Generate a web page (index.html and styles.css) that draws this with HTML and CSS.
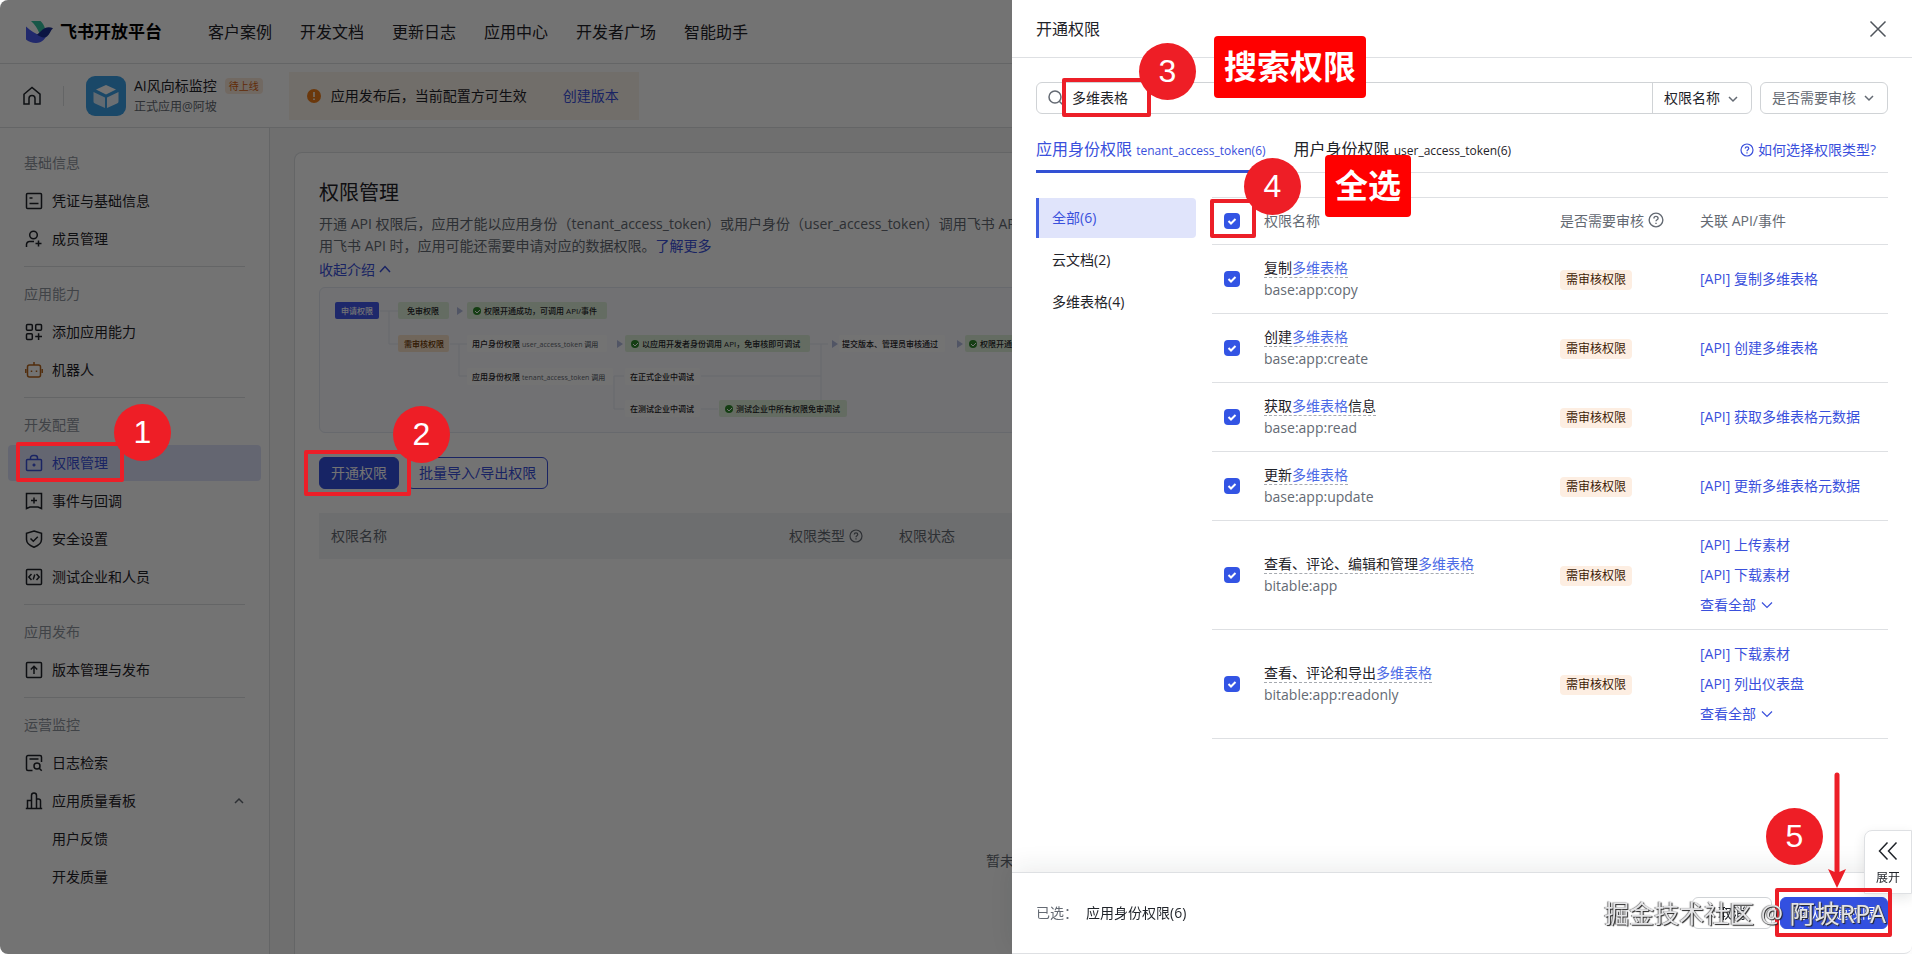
FILE: index.html
```html
<!DOCTYPE html>
<html lang="zh-CN">
<head>
    <meta charset="utf-8">
    <title>飞书开放平台 - 权限管理</title>
    <link rel="stylesheet" href="styles.css">
</head>
<body>
    <div class="page">
        <header class="topbar">
            <a href="#" class="logo">
                <svg width="28" height="24" viewBox="0 0 28 24">
                    <path d="M5 1h9.500c2 1.800 3.700 4.600 4.500 7.500l-5.500 5C11.500 8.500 9 4.500 5 1z" fill="#36c2a0"/>
                    <path d="M0 6.500c4.500 4.500 9.500 7.500 14.500 8.500 3 .500 6-1 8-3.500C20 18.500 16 23 10 23 6 23 2.500 21.700 0 19.500z" fill="#4a5cf0"/>
                    <path d="M11 14.500c3-1.500 4.500-5 8-6.500 2.800-1 5.800-.800 8 .300-2.500 2-3 6-6 8.200-3 2-7 .500-10-2z" fill="#1c2f94"/>
                </svg>
                <span>飞书开放平台</span>
            </a>
            <nav class="topnav">
                <a href="#">客户案例</a>
                <a href="#">开发文档</a>
                <a href="#">更新日志</a>
                <a href="#">应用中心</a>
                <a href="#">开发者广场</a>
                <a href="#">智能助手</a>
            </nav>
        </header>

        <div class="appbar">
            <a href="#" class="home" aria-label="首页">
                <svg width="20" height="20" viewBox="0 0 20 20" class="line"><path d="M2 8.200 10 1.500l8 6.700V18h-5v-5.500a3 3 0 0 0-6 0V18H2z"/></svg>
            </a>
            <svg class="app-icon" width="40" height="40" viewBox="0 0 40 40">
                <rect width="40" height="40" rx="9" fill="#3a9fe6"/>
                <path d="M20 9l10 4.500-10 5-10-5z" fill="#fff"/>
                <path d="M7.500 16l11.500 5.500V32l-10-4.500a2 2 0 0 1-1.500-2z" fill="#d8ecfb"/>
                <path d="M32.500 16 21 21.500V32l10-4.500a2 2 0 0 0 1.500-2z" fill="#eef7fe"/>
            </svg>
            <div class="app-info">
                <div class="app-name">AI风向标监控<span class="app-tag">待上线</span></div>
                <div class="app-owner">正式应用@阿坡</div>
            </div>
            <div class="notice">
                <svg width="14" height="14" viewBox="0 0 14 14"><circle cx="7" cy="7" r="7" fill="#ed7d1c"/><path d="M7 3v5M7 9.500v1.500" stroke="#fff" stroke-width="1.500"/></svg>
                <span>应用发布后，当前配置方可生效</span>
                <a href="#">创建版本</a>
            </div>
        </div>

        <div class="body">
            <aside class="sidebar">
                <div class="group">
                    <h2>基础信息</h2>
                    <a href="#"><svg viewBox="0 0 18 18" class="line"><rect x="1.500" y="1.500" width="15" height="15" rx="1"/><path d="M4.500 6h3M4.500 11.500h9"/></svg>凭证与基础信息</a>
                    <a href="#"><svg viewBox="0 0 18 18" class="line"><circle cx="8.500" cy="5" r="3.800"/><path d="M1.500 17v-2.500a3 3 0 0 1 3-3H9M13.500 10.500v6M10.500 13.500h6"/></svg>成员管理</a>
                </div>
                <div class="group">
                    <h2>应用能力</h2>
                    <a href="#"><svg viewBox="0 0 18 18" class="line"><rect x="1.500" y="1.500" width="5.800" height="5.800" rx="1"/><rect x="10.700" y="1.500" width="5.800" height="5.800" rx="1"/><rect x="1.500" y="10.700" width="5.800" height="5.800" rx="1"/><path d="M13.600 10.200v6.800M10.200 13.600H17"/></svg>添加应用能力</a>
                    <a href="#"><svg viewBox="0 0 18 18" class="line robot"><rect x="2.500" y="4" width="13" height="12" rx="2"/><path d="M9 1v3M.8 8v4M17.200 8v4M6.500 9.500v1.500M11.500 9.500v1.500"/></svg>机器人</a>
                </div>
                <div class="group">
                    <h2>开发配置</h2>
                    <a href="#" class="active"><svg viewBox="0 0 18 18" class="line"><rect x="1.500" y="5.500" width="15" height="11" rx="1"/><path d="M5.500 5.500V4a2.500 2.500 0 0 1 2.500-2.500h2A2.500 2.500 0 0 1 12.500 4v1.500M9 9.500v3M7.500 11h3"/></svg>权限管理</a>
                    <a href="#"><svg viewBox="0 0 18 18" class="line"><path d="M1.500 1.500h15v15L13 15H5l-3.500 1.500zM9 5.500v6M6 8.500h6"/></svg>事件与回调</a>
                    <a href="#"><svg viewBox="0 0 18 18" class="line"><path d="M9 1l7.500 2.300v6.200c0 3.500-3 6-7.500 7.800-4.500-1.800-7.500-4.300-7.500-7.800V3.300zM5.500 8.500 8.300 11.300 12.800 6.800"/></svg>安全设置</a>
                    <a href="#"><svg viewBox="0 0 18 18" class="line"><rect x="1.500" y="1.500" width="15" height="15" rx="1"/><path d="M6.500 6 3.800 9l2.700 3M11.500 6l2.700 3-2.700 3M9.800 6.500l-1.600 5"/></svg>测试企业和人员</a>
                </div>
                <div class="group">
                    <h2>应用发布</h2>
                    <a href="#"><svg viewBox="0 0 18 18" class="line"><rect x="1.500" y="1.500" width="15" height="15" rx="1"/><path d="M9 13V5.500M5.800 8.500 9 5.300l3.200 3.200"/></svg>版本管理与发布</a>
                </div>
                <div class="group">
                    <h2>运营监控</h2>
                    <a href="#"><svg viewBox="0 0 18 18" class="line"><path d="M16.500 8V3a1.500 1.500 0 0 0-1.500-1.500H3A1.500 1.500 0 0 0 1.500 3v12A1.500 1.500 0 0 0 3 16.500h4.500M4.500 5h9"/><circle cx="12" cy="12" r="3"/><path d="M14.200 14.200l2.500 2.500"/></svg>日志检索</a>
                    <a href="#"><svg viewBox="0 0 18 18" class="line"><path d="M.8 16.500h16.400M2.500 16.500V8.500h4v8M6.500 16.500V3.500a2 2 0 0 1 5 0v13M11.500 7h2a2 2 0 0 1 2 2v7.500"/></svg>应用质量看板<svg viewBox="0 0 12 12" class="line fold"><path d="M2 8l4-4 4 4"/></svg></a>
                    <a href="#" class="sub">用户反馈</a>
                    <a href="#" class="sub">开发质量</a>
                </div>
            </aside>

            <main class="card">
                <h1>权限管理</h1>
                <p>开通 API 权限后，应用才能以应用身份（tenant_access_token）或用户身份（user_access_token）调用飞书 API<br>用飞书 API 时，应用可能还需要申请对应的数据权限。<a href="#">了解更多</a></p>
                <a href="#" class="toggle">收起介绍 <svg width="12" height="12" viewBox="0 0 12 12" class="line"><path d="M1 9l5-5.500L11 9"/></svg></a>

                <div class="intro">
                    <svg class="flow" width="900" height="144" viewBox="0 0 900 144">
                        <g class="wire">
                            <path d="M60 23h18M69 23v33h9M130 56h17M139 56v32h8M294 88h10M294 88v33h10M490 56h18M381 88h120M501 56v56M381 121h17"/>
                        </g>
                        <g class="tri">
                            <path d="M137 19l6 4-6 4zM297 52l6 4-6 4zM512 52l6 4-6 4zM637 52l6 4-6 4z"/>
                        </g>
                        <rect x="15" y="14" width="44" height="17" rx="2" fill="#4359ee"/>
                        <g class="ok">
                            <rect x="78" y="14" width="51" height="17" rx="2"/>
                            <rect x="147" y="14" width="140" height="17" rx="2"/>
                            <rect x="305" y="47" width="185" height="17" rx="2"/>
                            <rect x="645" y="47" width="140" height="17" rx="2"/>
                            <rect x="399" y="112" width="128" height="17" rx="2"/>
                        </g>
                        <rect x="78" y="47" width="51" height="17" rx="2" fill="#f9e3ca"/>
                        <g class="plain">
                            <rect x="147" y="47" width="140" height="17" rx="2"/>
                            <rect x="147" y="80" width="146" height="17" rx="2"/>
                            <rect x="305" y="80" width="75" height="17" rx="2"/>
                            <rect x="305" y="112" width="75" height="17" rx="2"/>
                            <rect x="519" y="47" width="106" height="17" rx="2"/>
                        </g>
                        <g fill="#2f8a2c">
                            <circle cx="157" cy="23" r="4"/><circle cx="315" cy="56" r="4"/><circle cx="653" cy="56" r="4"/><circle cx="409" cy="121" r="4"/>
                        </g>
                        <path class="tick" d="M155 23l2 2 3-3M313 56l2 2 3-3M651 56l2 2 3-3M407 121l2 2 3-3"/>
                        <text x="21" y="26" class="light">申请权限</text>
                        <text x="87" y="26">免审权限</text>
                        <text x="164" y="26">权限开通成功，可调用 API/事件</text>
                        <text x="84" y="59" class="warn">需审核权限</text>
                        <text x="152" y="59">用户身份权限 <tspan class="dim">user_access_token 调用</tspan></text>
                        <text x="322" y="59">以应用开发者身份调用 API，免审核即可调试</text>
                        <text x="522" y="59">提交版本、管理员审核通过</text>
                        <text x="660" y="59">权限开通成功，可调用 API/事件</text>
                        <text x="152" y="92">应用身份权限 <tspan class="dim">tenant_access_token 调用</tspan></text>
                        <text x="310" y="92">在正式企业中调试</text>
                        <text x="310" y="124">在测试企业中调试</text>
                        <text x="416" y="124">测试企业中所有权限免审调试</text>
                    </svg>
                </div>

                <div class="actions">
                    <button type="button" class="btn primary">开通权限</button>
                    <button type="button" class="btn outline">批量导入/导出权限</button>
                </div>

                <table class="owned">
                    <thead>
                        <tr>
                            <th class="c-name">权限名称</th>
                            <th class="c-type">权限类型 <svg width="14" height="14" viewBox="0 0 14 14" class="line thin help"><circle cx="7" cy="7" r="6"/><path d="M5.200 5.600c0-2.400 3.600-2.400 3.600 0 0 1.200-1.800 1.300-1.800 2.600M7 9.300v1.200"/></svg></th>
                            <th>权限状态</th>
                        </tr>
                    </thead>
                </table>
                <div class="empty">暂未开通任何权限，请先开通权限</div>
            </main>
        </div>
    </div>

    <div class="mask"></div>

    <section class="drawer">
        <header class="drawer-head">
            <h2>开通权限</h2>
            <button type="button" class="close" aria-label="关闭"><svg width="18" height="18" viewBox="0 0 18 18" class="line"><path d="M1.500 1.500l15 15M16.500 1.500l-15 15"/></svg></button>
        </header>

        <div class="drawer-body">
            <div class="filters">
                <div class="search">
                    <svg width="16" height="16" viewBox="0 0 16 16" class="line"><circle cx="7" cy="7" r="6"/><path d="M11.300 11.300l4 4"/></svg>
                    <input type="text" value="多维表格" aria-label="搜索权限">
                    <div class="pick by-name">
                        <select aria-label="搜索范围"><option>权限名称</option></select>
                        <svg width="12" height="12" viewBox="0 0 12 12" class="line"><path d="M2 4l4 4 4-4"/></svg>
                    </div>
                </div>
                <div class="pick by-review">
                    <select aria-label="是否需要审核"><option>是否需要审核</option></select>
                    <svg width="12" height="12" viewBox="0 0 12 12" class="line"><path d="M2 4l4 4 4-4"/></svg>
                </div>
            </div>

            <div class="tabs">
                <a href="#" class="tab on">应用身份权限 <small>tenant_access_token(6)</small></a>
                <a href="#" class="tab">用户身份权限 <small>user_access_token(6)</small></a>
                <a href="#" class="how"><svg width="14" height="14" viewBox="0 0 14 14" class="line thin"><circle cx="7" cy="7" r="6"/><path d="M5.200 5.600c0-2.400 3.600-2.400 3.600 0 0 1.200-1.800 1.300-1.800 2.600M7 9.300v1.200"/></svg>如何选择权限类型?</a>
            </div>

            <div class="scopes">
                <nav class="types">
                    <a href="#" class="on">全部(6)</a>
                    <a href="#">云文档(2)</a>
                    <a href="#">多维表格(4)</a>
                </nav>
                <table class="list">
                    <thead>
                        <tr>
                            <th class="c-check"><input type="checkbox" aria-label="全选" checked></th>
                            <th>权限名称</th>
                            <th class="c-review">是否需要审核 <svg width="16" height="16" viewBox="0 0 14 14" class="line thin help"><circle cx="7" cy="7" r="6"/><path d="M5.200 5.600c0-2.400 3.600-2.400 3.600 0 0 1.200-1.800 1.300-1.800 2.600M7 9.300v1.200"/></svg></th>
                            <th class="c-api">关联 API/事件</th>
                        </tr>
                    </thead>
                    <tbody>
                        <tr>
                            <td><input type="checkbox" id="s1" checked></td>
                            <td><label for="s1">复制<em>多维表格</em></label><div class="code">base:app:copy</div></td>
                            <td><span class="tag">需审核权限</span></td>
                            <td><a href="#">[API] 复制多维表格</a></td>
                        </tr>
                        <tr>
                            <td><input type="checkbox" id="s2" checked></td>
                            <td><label for="s2">创建<em>多维表格</em></label><div class="code">base:app:create</div></td>
                            <td><span class="tag">需审核权限</span></td>
                            <td><a href="#">[API] 创建多维表格</a></td>
                        </tr>
                        <tr>
                            <td><input type="checkbox" id="s3" checked></td>
                            <td><label for="s3">获取<em>多维表格</em>信息</label><div class="code">base:app:read</div></td>
                            <td><span class="tag">需审核权限</span></td>
                            <td><a href="#">[API] 获取多维表格元数据</a></td>
                        </tr>
                        <tr>
                            <td><input type="checkbox" id="s4" checked></td>
                            <td><label for="s4">更新<em>多维表格</em></label><div class="code">base:app:update</div></td>
                            <td><span class="tag">需审核权限</span></td>
                            <td><a href="#">[API] 更新多维表格元数据</a></td>
                        </tr>
                        <tr>
                            <td><input type="checkbox" id="s5" checked></td>
                            <td><label for="s5">查看、评论、编辑和管理<em>多维表格</em></label><div class="code">bitable:app</div></td>
                            <td><span class="tag">需审核权限</span></td>
                            <td>
                                <a href="#">[API] 上传素材</a>
                                <a href="#">[API] 下载素材</a>
                                <a href="#">查看全部 <svg width="12" height="12" viewBox="0 0 12 12" class="line thin"><path d="M1 3.500l5 5 5-5"/></svg></a>
                            </td>
                        </tr>
                        <tr>
                            <td><input type="checkbox" id="s6" checked></td>
                            <td><label for="s6">查看、评论和导出<em>多维表格</em></label><div class="code">bitable:app:readonly</div></td>
                            <td><span class="tag">需审核权限</span></td>
                            <td>
                                <a href="#">[API] 下载素材</a>
                                <a href="#">[API] 列出仪表盘</a>
                                <a href="#">查看全部 <svg width="12" height="12" viewBox="0 0 12 12" class="line thin"><path d="M1 3.500l5 5 5-5"/></svg></a>
                            </td>
                        </tr>
                    </tbody>
                </table>
            </div>
        </div>

        <footer class="drawer-foot">
            <span>已选：</span>
            <span class="picked">应用身份权限(6)</span>
            <button type="button" class="btn cancel">取消</button>
            <button type="button" class="btn primary">确认开通权限</button>
        </footer>
    </section>

    <button type="button" class="expand">
        <svg width="20" height="20" viewBox="0 0 20 20" class="line"><path d="M9.500 1.500 1.500 10l8 8.500M18.500 1.500l-8 8.500 8 8.500"/></svg>
        <span>展开</span>
    </button>

    <!-- 步骤标注 -->
    <div class="frame f1"></div><div class="step s1">1</div>
    <div class="frame f2"></div><div class="step s2">2</div>
    <div class="frame f3"></div><div class="step s3">3</div><div class="tip t3">搜索权限</div>
    <div class="frame f4"></div><div class="step s4">4</div><div class="tip t4">全选</div>
    <div class="frame f5"></div><div class="step s5">5</div>
    <svg class="arrow" width="20" height="118" viewBox="0 0 20 118"><path d="M10 3v100" stroke="#ec1f28" stroke-width="5" stroke-linecap="round"/><path d="M1 97l9 4 9-4-9 19z" fill="#ec1f28"/></svg>
    <div class="watermark">掘金技术社区 @ 阿坡RPA</div>
</body>
</html>
```

FILE: styles.css
```css
*{
    box-sizing: border-box;
}

body{
    margin: 0;
    height: 100vh;
    overflow: hidden;
    background: #fff;
    color: #1f2329;
    font-family: "Open Sans", "Noto Sans CJK SC", sans-serif;
    font-size: 14px;
    line-height: 22px;
}

h1, h2, p{
    margin: 0;
    font-weight: normal;
}

a{
    color: #3a50dc;
    text-decoration: none;
}

button, input, select{
    font: inherit;
    color: inherit;
}

.line{
    fill: none;
    stroke: currentColor;
    stroke-width: 1.5;
}

.thin{
    stroke-width: 1.2;
}

/* 页面 */
.page{
    display: flex;
    flex-direction: column;
    height: 100vh;
    background: #fff;
}

.topbar{
    display: flex;
    align-items: center;
    flex: none;
    height: 64px;
    padding: 0 26px;
    border-bottom: 1px solid #dee0e3;
}

.logo{
    display: flex;
    align-items: center;
    gap: 6px;
    color: #000;
    font-size: 17px;
    font-weight: bold;
}

.topnav{
    display: flex;
    gap: 28px;
    margin-left: 46px;
    font-size: 16px;
}

.topnav a{
    color: #1f2329;
}

.appbar{
    display: flex;
    align-items: center;
    flex: none;
    height: 64px;
    padding-left: 22px;
    border-bottom: 1px solid #dee0e3;
}

.home{
    display: flex;
    padding-right: 21px;
    border-right: 1px solid #dee0e3;
    color: #1f2329;
}

.app-icon{
    margin: 0 8px 0 22px;
}

.app-name{
    display: flex;
    align-items: center;
}

.app-tag{
    margin-left: 8px;
    padding: 0 4px;
    border-radius: 4px;
    background: #fbe8da;
    color: #d65f0e;
    font-size: 10px;
    line-height: 16px;
}

.app-owner{
    color: #646a73;
    font-size: 12px;
    line-height: 20px;
}

.notice{
    display: flex;
    align-items: center;
    gap: 10px;
    height: 48px;
    margin-left: 26px;
    padding: 0 20px 0 18px;
    background: #fbf4ea;
}

.notice a{
    margin-left: 26px;
}

.body{
    display: flex;
    flex: 1;
    min-height: 0;
    background: #f5f6f7;
}

.sidebar{
    flex: none;
    width: 270px;
    padding: 16px 8px 0;
    border-right: 1px solid #dee0e3;
    background: #fff;
}

.group{
    display: flex;
    flex-direction: column;
}

.group h2{
    padding-left: 16px;
    color: #8f959e;
    font-size: 14px;
    line-height: 38px;
}

.group a{
    display: flex;
    align-items: center;
    gap: 9px;
    height: 36px;
    margin: 1px 0;
    padding: 0 16px 0 17px;
    border-radius: 4px;
    color: #1f2329;
}

.group a svg{
    width: 18px;
    height: 18px;
}

.group + .group::before{
    content: "";
    margin: 8px 16px;
    border-top: 1px solid #dee0e3;
}

.group .active{
    background: #dde3fb;
    color: #3a50dc;
}

.group .robot{
    color: #b5651d;
}

.group .sub{
    padding-left: 44px;
}

.group a .fold{
    width: 12px;
    height: 12px;
    margin-left: auto;
    color: #646a73;
}

.card{
    flex: 1;
    min-width: 0;
    margin: 24px 24px 0;
    padding: 26px 24px 0;
    overflow: hidden;
    border: 1px solid #dee0e3;
    border-bottom: 0;
    border-radius: 8px 8px 0 0;
    background: #fff;
}

.card h1{
    font-size: 20px;
    line-height: 28px;
}

.card p{
    margin-top: 6px;
    color: #646a73;
    white-space: nowrap;
}

.toggle{
    display: inline-block;
    margin-top: 2px;
}

.intro{
    height: 146px;
    margin-top: 6px;
    overflow: hidden;
    border: 1px solid #e4e8f2;
    border-radius: 6px;
    background: #fafbff;
}

.flow text{
    fill: #1f2329;
    font-size: 8px;
    font-weight: 500;
}

.flow .light{
    fill: #fff;
}

.flow .warn{
    fill: #6b3500;
}

.flow .dim{
    fill: #646a73;
    font-size: 7px;
}

.flow .wire{
    fill: none;
    stroke: #e6e9f2;
}

.flow .tri{
    fill: #b4bde0;
}

.flow .ok{
    fill: #def0da;
}

.flow .plain{
    fill: #fff;
}

.flow .tick{
    fill: none;
    stroke: #fff;
}

.actions{
    display: flex;
    gap: 8px;
    margin-top: 24px;
}

.btn{
    height: 32px;
    padding: 0 11px;
    border: 1px solid #d0d3d6;
    border-radius: 6px;
    background: #fff;
}

.btn.primary{
    border-color: #3350e0;
    background: #3350e0;
    color: #fff;
}

.btn.outline{
    border-color: #3a50dc;
    color: #3a50dc;
}

.owned{
    width: 100%;
    margin-top: 24px;
    border-collapse: collapse;
    table-layout: fixed;
    background: #f2f3f5;
    color: #646a73;
}

.owned th{
    height: 46px;
    padding: 0 12px;
    font-weight: normal;
    text-align: left;
    white-space: nowrap;
}

.owned .c-name{
    width: 458px;
}

.owned .c-type{
    width: 110px;
}

.help{
    vertical-align: -2px;
}

.empty{
    margin-top: 291px;
    color: #646a73;
    text-align: center;
}

.mask{
    position: fixed;
    inset: 0;
    border-radius: 8px;
    background: rgba(0, 0, 0, .55);
}

/* 抽屉 */
.drawer{
    position: fixed;
    top: 0;
    right: 0;
    bottom: 0;
    display: flex;
    flex-direction: column;
    width: 900px;
    max-width: 100%;
    background: #fff;
}

.drawer-head{
    display: flex;
    align-items: center;
    justify-content: space-between;
    flex: none;
    height: 58px;
    padding: 0 25px 0 24px;
    border-bottom: 1px solid #dee0e3;
}

.drawer-head h2{
    font-size: 16px;
}

.close{
    display: flex;
    padding: 0;
    border: 0;
    background: none;
    color: #50555c;
}

.drawer-body{
    flex: 1;
    padding: 24px 24px 0;
    overflow: hidden;
}

.filters{
    display: flex;
    gap: 8px;
}

.search{
    display: flex;
    align-items: center;
    flex: 1;
    height: 32px;
    padding-left: 11px;
    border: 1px solid #d0d3d6;
    border-radius: 6px;
}

.search > svg{
    color: #646a73;
}

.search input{
    flex: 1;
    min-width: 0;
    padding: 0 8px;
    border: 0;
    outline: none;
    background: none;
}

.pick{
    position: relative;
    height: 32px;
}

.pick select{
    width: 100%;
    height: 100%;
    padding: 0 11px;
    border: 0;
    border-radius: 6px;
    background: none;
    appearance: none;
}

.pick svg{
    position: absolute;
    top: 10px;
    right: 12px;
    color: #646a73;
    pointer-events: none;
}

.by-name{
    width: 99px;
    height: 30px;
    border-left: 1px solid #d0d3d6;
}

.by-review{
    width: 128px;
    border: 1px solid #d0d3d6;
    border-radius: 6px;
    color: #646a73;
}

.by-review svg{
    top: 9px;
}

.tabs{
    display: flex;
    align-items: center;
    gap: 28px;
    height: 59px;
    border-bottom: 1px solid #dee0e3;
}

.tab{
    height: 59px;
    padding-top: 24px;
    border-bottom: 3px solid transparent;
    color: #1f2329;
    font-size: 16px;
    white-space: nowrap;
}

.tab small{
    font-size: 12px;
}

.tab.on{
    border-color: #3351d4;
    color: #3a50dc;
}

.how{
    display: flex;
    align-items: center;
    gap: 4px;
    margin-left: auto;
    padding: 13px 12px 0 0;
}

.scopes{
    display: flex;
    align-items: flex-start;
    gap: 16px;
    padding-top: 24px;
}

.types{
    display: flex;
    flex-direction: column;
    flex: none;
    gap: 2px;
    width: 160px;
    padding-top: 1px;
}

.types a{
    padding: 0 13px;
    border-left: 3px solid transparent;
    border-radius: 0 4px 4px 0;
    color: #1f2329;
    line-height: 40px;
}

.types .on{
    border-color: #3f5fe0;
    background: #e0e4fb;
    color: #3a50dc;
}

.list{
    flex: 1;
    border-collapse: collapse;
    border-top: 1px solid #dee0e3;
    table-layout: fixed;
}

.list th,
.list td{
    height: 69px;
    padding: 9px 0;
    border-bottom: 1px solid #dee0e3;
    text-align: left;
    vertical-align: middle;
}

.list th{
    height: 47px;
    padding: 0;
    color: #646a73;
    font-weight: normal;
}

.list .c-check{
    width: 52px;
}

.list .c-review{
    width: 140px;
}

.list .c-api{
    width: 188px;
}

.list input{
    display: block;
    width: 16px;
    height: 16px;
    margin: 0 0 0 12px;
    appearance: none;
    border-radius: 4px;
    background: #3354e4;
}

.list input:checked{
    background: #3354e4 url("data:image/svg+xml,%3Csvg xmlns='http://www.w3.org/2000/svg' viewBox='0 0 16 16'%3E%3Cpath d='M4.500 8l2.500 2.500L11.500 6' fill='none' stroke='white' stroke-width='2'/%3E%3C/svg%3E");
}

.list label{
    border-bottom: 1px dashed #a6aab0;
}

.list em{
    color: #4c6ae6;
    font-style: normal;
}

.list .code{
    color: #646a73;
}

.list td a{
    display: block;
    line-height: 30px;
}

.list td a svg{
    margin-left: 1px;
    vertical-align: -1px;
}

.tag{
    display: inline-block;
    padding: 0 6px;
    border-radius: 4px;
    background: #fdeee2;
    color: #3d1b06;
    font-size: 12px;
    line-height: 20px;
    vertical-align: middle;
}

.drawer-foot{
    display: flex;
    align-items: center;
    flex: none;
    gap: 8px;
    height: 82px;
    padding: 0 24px;
    border: 1px solid #dee0e3;
    border-width: 1px 0;
    border-radius: 0 0 8px 0;
    box-shadow: 0 -6px 24px rgba(31, 35, 41, .08);
}

.drawer-foot span:first-child{
    color: #646a73;
}

.drawer-foot .picked{
    margin-right: auto;
}

.btn.cancel{
    width: 80px;
}

.expand{
    position: fixed;
    right: 0;
    bottom: 60px;
    display: flex;
    flex-direction: column;
    align-items: center;
    justify-content: center;
    gap: 8px;
    width: 48px;
    height: 64px;
    padding: 3px 0 0;
    border: 1px solid #dee0e3;
    border-radius: 8px 0 0 0;
    background: #fff;
    box-shadow: 0 4px 12px rgba(31, 35, 41, .1);
    font-size: 12px;
    line-height: 18px;
}

/* 标注层 */
.frame,
.step,
.tip,
.arrow,
.watermark{
    position: absolute;
    z-index: 10;
}

.frame{
    border: 4px solid #ec1f28;
    border-radius: 2px;
}

.step{
    width: 57px;
    height: 57px;
    border-radius: 50%;
    background: #ee1e26;
    color: #fff;
    font-family: "Liberation Sans", sans-serif;
    font-size: 32px;
    line-height: 57px;
    text-align: center;
}

.tip{
    padding: 0 10px;
    border-radius: 4px;
    background: #f00;
    color: #fff;
    font-size: 33px;
    font-weight: bold;
    line-height: 62px;
}

.f1{ left: 16px; top: 442px; width: 108px; height: 40px; }
.s1{ left: 114px; top: 404px; }
.f2{ left: 304px; top: 450px; width: 107px; height: 46px; }
.s2{ left: 393px; top: 406px; }
.f3{ right: 761px; top: 78px; width: 89px; height: 39px; }
.s3{ right: 716px; top: 43px; }
.t3{ right: 546px; top: 36px; }
.f4{ right: 656px; top: 199px; width: 46px; height: 39px; }
.s4{ right: 611px; top: 158px; }
.t4{ right: 501px; top: 155px; }
.f5{ right: 20px; bottom: 17px; width: 117px; height: 49px; }
.s5{ right: 89px; bottom: 89px; }

.arrow{
    right: 65px;
    bottom: 64px;
}

.watermark{
    right: 26px;
    bottom: 24px;
    color: #e4e4e6;
    font-size: 25px;
    line-height: 34px;
    text-shadow: 1px 1px 1px #222, -1px 0 1px #777;
}
```
